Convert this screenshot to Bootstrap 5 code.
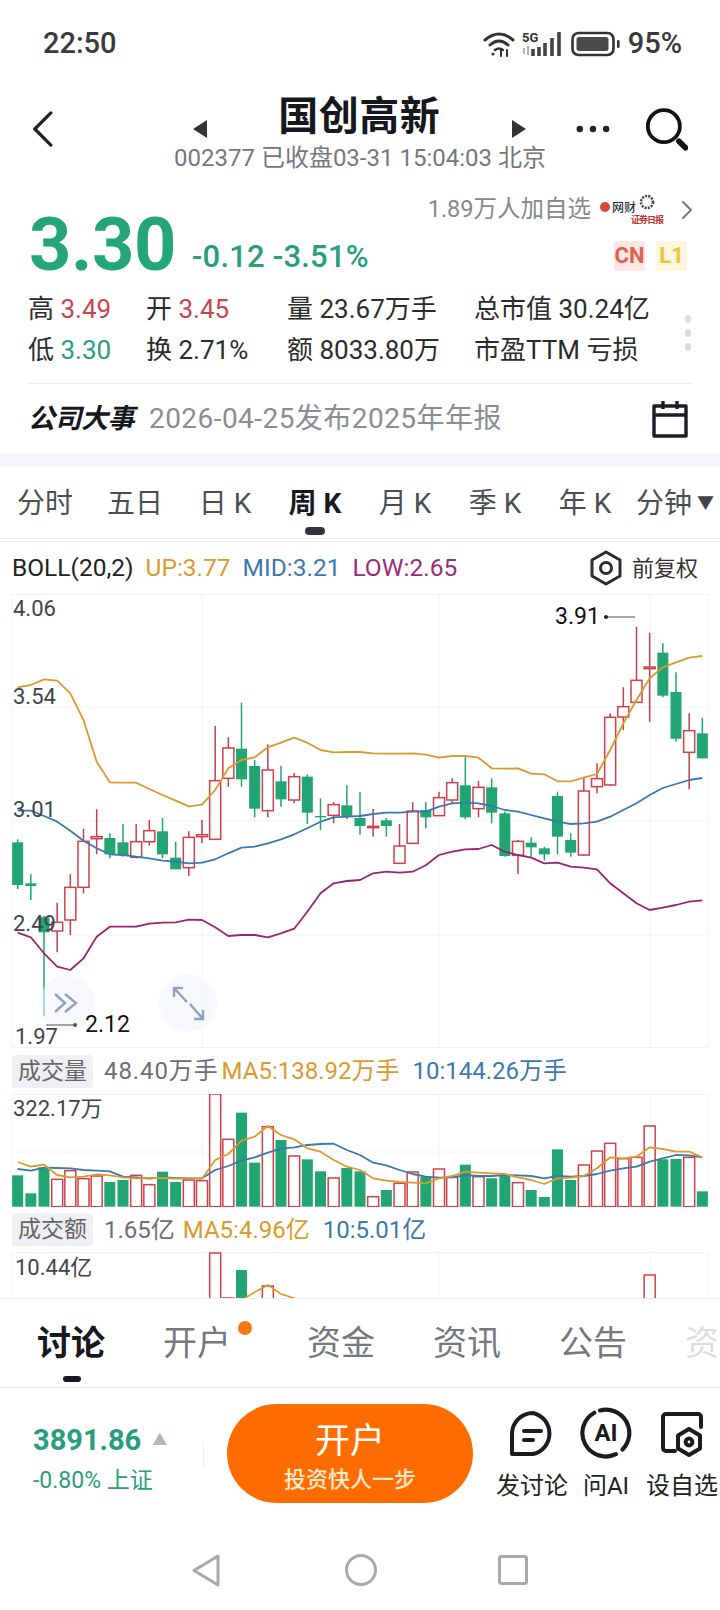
<!DOCTYPE html>
<html lang="zh">
<head>
  <meta charset="UTF-8">
  <title>国创高新</title>
  <meta name="viewport" content="width=device-width, initial-scale=1">
  <link href="https://cdn.jsdelivr.net/npm/bootstrap@5.3.0/dist/css/bootstrap.min.css" rel="stylesheet">
  <style>
    html, body { width: 720px; height: 1610px; overflow: hidden; background: #fff; }
    body { font-family: Roboto, "Noto Sans CJK SC", sans-serif; color: #222; }
    .screen { width: 720px; height: 1610px; overflow: hidden; }
    .screen > * { flex-shrink: 0; }
    .txt-red { color: #c9444d; }
    .txt-green { color: #2a9d7c; }
    .txt-orange { color: #dc9a2d; }
    .txt-blue { color: #3d78ad; }
    .txt-purple { color: #9a2d78; }
    .txt-gray { color: #6b6e73; }

    .status-row { height: 84px; padding: 4px 38px 0 43px; font-size: 29px; font-weight: 500; color: #3a3a3a; }
    .status-icons { gap: 7px; }

    .head-row { height: 66px; padding: 24px 32px 0; }
    .head-title { font-size: 40px; font-weight: 700; color: #15181d; width: 171px; text-align: center; line-height: 1; margin-bottom: 24px; white-space: nowrap; letter-spacing: .5px; }
    .head-mid { margin-left: 140px; gap: 67px; }
    .head-more { margin-left: 50px; }
    .head-search { margin-left: 35px; }
    .head-sub { height: 30px; font-size: 24px; color: #74777c; padding-left: 174px; line-height: 30px; margin-top: -7px; white-space: nowrap; }

    .quote-box { height: 115px; padding: 0 28px 0 29px; margin-top: 8px; }
    .big-price { font-size: 74px; font-weight: 700; color: #25a67a; line-height: 1; letter-spacing: -.5px; margin-top: 27px; }
    .price-diff { font-size: 31px; font-weight: 500; color: #2a9d7c; margin: 54px 0 0 16px; white-space: nowrap; line-height: 44px; letter-spacing: .2px; }
    .follow-row { height: 36px; margin-top: 11px; font-size: 23.5px; color: #85888c; margin-right: -1px; white-space: nowrap; }
    .tag-row { gap: 11px; margin-top: 13px; margin-right: 5px; }
    .mkt-tag { width: 31px; height: 30px; line-height: 30px; text-align: center; font-size: 22px; font-weight: 700; border-radius: 2px; }
    .tag-cn { background: #fde7e4; color: #e2604f; }
    .tag-l1 { background: #fdf5dc; color: #eec33f; }

    .stat-grid { display: grid; grid-template-columns: 118px 141px 187px 1fr; grid-auto-rows: 41px; align-items: center; padding-left: 28px; font-size: 26px; color: #2b2b2b; white-space: nowrap; margin-top: -7px; height: 82px; }
    .stat-wrap { position: relative; }
    .side-dots { position: absolute; left: 685px; top: 19px; gap: 6px; }
    .side-dots i { display: block; width: 6px; height: 8px; border-radius: 50%; background: #dcdcdc; }
    .stat-line { height: 1px; background: #eee; margin: 12px 28px 0; }

    .event-row { height: 70px; padding: 0 32px 0 28px; white-space: nowrap; }
    .event-name { font-weight: 700; font-style: italic; color: #15181d; font-size: 27px; width: 121px; letter-spacing: -.5px; }
    .event-txt { color: #8a8d91; font-size: 28px; letter-spacing: .45px; }
    .gap-band { height: 12px; background: #f5f6fb; }

    .period-row { display: grid; grid-template-columns: repeat(8, 90px); height: 73px; font-size: 28px; color: #4a4d52; border-bottom: 1px solid #e6e6e6; position: relative; white-space: nowrap; }
    .period-item { display: flex; align-items: center; justify-content: center; padding-top: 3px; }
    .period-on { font-weight: 700; color: #17191d; }
    .period-bar { position: absolute; left: 305px; top: 61px; width: 20px; height: 8px; background: #33363a; border-radius: 4px; }
    .period-k { margin-left: 7px; }
    .period-tri { font-size: 17px; margin-left: 5px; color: #444; }
    .thin-line { height: 3px; border-bottom: 1px solid #e9e9e9; }

    .boll-row { height: 52px; padding: 0 22px 0 12px; font-size: 24.5px; white-space: nowrap; }
    .boll-row span.boll-item { margin-right: 12px; }
    .adj-txt { font-size: 22px; color: #333; margin-left: 9px; }

    .chart-box { position: relative; width: 720px; overflow: hidden; }
    .chart-box svg { display: block; }
    .chart-one { height: 454px; }
    .chart-two { height: 113px; }
    .chart-three { height: 46px; }
    .axis-txt { position: absolute; font-size: 22px; line-height: 26px; color: #40434a; white-space: nowrap; }
    .mark-txt { color: #111; font-size: 23px; }

    .vol-row { height: 46px; padding-left: 12px; font-size: 24px; white-space: nowrap; }
    .vol-amt { height: 45px; }
    .vol-tag { background: #eef0f4; color: #666; border-radius: 4px; height: 33px; line-height: 33px; width: 81px; text-align: center; font-size: 23px; margin-right: 11px; }
    .vol-row span.vol-item { margin-right: 8px; }
    .vol-row span.vol-wide { letter-spacing: .9px; margin-right: 3px; }
    .vol-row span.vol-ma { margin-right: 13px; }

    .sub-tabs { height: 90px; border-top: 1px solid #ececec; border-bottom: 1px solid #e8e8e8; padding-left: 37px; gap: 58px; font-size: 34px; color: #75787d; position: relative; background: #fff; white-space: nowrap; }
    .sub-on { font-weight: 700; color: #15181d; }
    .sub-open { margin-right: 18px; position: relative; }
    .sub-dot { position: absolute; left: 75px; top: 3px; width: 14px; height: 14px; background: #f3780e; border-radius: 50%; }
    .sub-fade { color: #dedede; }
    .sub-bar { position: absolute; left: 63px; top: 77px; width: 18px; height: 6px; background: #15181d; border-radius: 3px; }

    .action-row { height: 131px; position: relative; padding-left: 33px; }
    .index-box { width: 170px; padding-top: 10px; }
    .index-val { font-size: 29px; font-weight: 700; color: #2a9d7c; line-height: 36px; white-space: nowrap; }
    .index-tri { color: #b5b5b5; font-size: 15px; margin-left: 11px; vertical-align: 5px; font-weight: 400; }
    .index-sub { font-size: 23px; color: #2a9d7c; line-height: 30px; margin-top: 8px; white-space: nowrap; }
    .v-sep { width: 1px; height: 26px; background: #eee; margin: 0 23px 0 0; }
    .open-btn { width: 246px; height: 99px; border: 0; border-radius: 50px; background: #ff6d00; color: #fff; line-height: 1; padding: 8px 0 0; flex: none; }
    .open-big { display: block; font-size: 35px; }
    .open-small { display: block; font-size: 22px; font-weight: 500; color: #ffe9cc; margin-top: 10px; }
    .side-act { position: absolute; top: 22px; text-align: center; font-size: 24px; color: #222; white-space: nowrap; line-height: 28px; }
    .act-talk { left: 496px; width: 72px; }
    .act-ai { left: 580px; width: 52px; }
    .act-pick { left: 646px; width: 72px; }
    .side-act svg { display: block; margin: 0 auto 14px; }
    .side-act svg.ai-ring { margin: -3px auto 13px; }
    .sys-nav { height: 90px; padding: 12px 0 0 192px; }
    .nav-home { margin: 0 121px 0 125px; }
  </style>
</head>
<body>
<div class="screen d-flex flex-column">

  <div class="status-row d-flex align-items-center justify-content-between">
    <span>22:50</span>
    <div class="status-icons d-flex align-items-center">
      <svg width="32" height="26" viewBox="0 0 32 26" fill="none" stroke="#333" stroke-linecap="round">
        <path d="M2 9Q16-3 30 9" stroke-width="3"/>
        <path d="M7 14Q16 6 25 14" stroke-width="3"/>
        <path d="M12 19Q16 16 20 19" stroke-width="2.4"/>
        <circle cx="10" cy="23" r="1.6" fill="#333" stroke="none"/>
        <path d="M18 25V19M24 25V19" stroke-width="2"/>
      </svg>
      <svg width="42" height="26" viewBox="0 0 42 26">
        <text x="0" y="11" font-family="Roboto" font-size="13" font-weight="700" fill="#333">5G</text>
        <path d="M2 17v6M6 15v9" stroke="#999" stroke-width="1.6"/>
        <path d="M11 18v7M17 16v9M23 12v13M30 7v18M37 1v24" stroke="#444" stroke-width="3.6"/>
      </svg>
      <svg width="50" height="26" viewBox="0 0 50 26">
        <rect x="1.5" y="2" width="41" height="22" rx="6" fill="none" stroke="#333" stroke-width="2.6"/>
        <rect x="5.5" y="6" width="32" height="14" rx="2.5" fill="#4a4a4a"/>
        <rect x="46" y="9" width="2.6" height="8" rx="1.2" fill="#333"/>
      </svg>
      <span>95%</span>
    </div>
  </div>

  <div class="head-row d-flex align-items-center">
    <svg width="22" height="38" viewBox="0 0 22 38" fill="none" stroke="#222" stroke-width="3.4" stroke-linecap="round" stroke-linejoin="round"><path d="M20 2 3 19l17 17"/></svg>
    <div class="head-mid d-flex align-items-center">
      <svg width="14" height="18" viewBox="0 0 14 18"><path d="M14 0v18L0 9z" fill="#333"/></svg>
      <span class="head-title">国创高新</span>
      <svg width="14" height="18" viewBox="0 0 14 18"><path d="M0 0v18l14-9z" fill="#333"/></svg>
    </div>
    <svg class="head-more" width="36" height="8" viewBox="0 0 36 8" fill="#222"><circle cx="4" cy="4" r="3.4"/><circle cx="18" cy="4" r="3.4"/><circle cx="32" cy="4" r="3.4"/></svg>
    <svg class="head-search" width="46" height="46" viewBox="0 0 46 46" fill="none" stroke="#111"><circle cx="20" cy="20" r="17" stroke-width="4"/><path d="M36 36l7 7" stroke-width="6" stroke-linecap="round"/></svg>
  </div>
  <div class="head-sub">002377 已收盘03-31 15:04:03 北京</div>

  <div class="quote-box d-flex justify-content-between">
    <div class="d-flex">
      <span class="big-price">3.30</span>
      <span class="price-diff">-0.12 -3.51%</span>
    </div>
    <div class="d-flex flex-column align-items-end">
      <div class="follow-row d-flex align-items-center">
        <span>1.89万人加自选</span>
        <svg class="ms-2" width="66" height="36" viewBox="0 0 66 36">
          <circle cx="6" cy="15" r="5" fill="#d8453a"/>
          <text x="13" y="20" font-family="Noto Sans CJK SC" font-size="12" font-weight="500" fill="#333">网财</text>
          <circle cx="48" cy="10" r="6" fill="none" stroke="#445" stroke-width="2.6" stroke-dasharray="2 1.2"/>
          <text x="32" y="31" font-family="Noto Sans CJK SC" font-size="9" font-weight="700" fill="#b8352a" textLength="33">证券日报</text>
        </svg>
        <svg class="ms-3" width="12" height="20" viewBox="0 0 12 20" fill="none" stroke="#777" stroke-width="2" stroke-linecap="round" stroke-linejoin="round"><path d="M2 2l8 8-8 8"/></svg>
      </div>
      <div class="tag-row d-flex">
        <span class="mkt-tag tag-cn">CN</span>
        <span class="mkt-tag tag-l1">L1</span>
      </div>
    </div>
  </div>

  <div class="stat-wrap">
    <div class="stat-grid">
      <div>高 <span class="txt-red">3.49</span></div>
      <div>开 <span class="txt-red">3.45</span></div>
      <div>量 23.67万手</div>
      <div>总市值 30.24亿</div>
      <div>低 <span class="txt-green">3.30</span></div>
      <div>换 2.71%</div>
      <div>额 8033.80万</div>
      <div>市盈TTM 亏损</div>
    </div>
    <div class="side-dots d-flex flex-column"><i></i><i></i><i></i></div>
    <div class="stat-line"></div>
  </div>

  <div class="event-row d-flex align-items-center">
    <span class="event-name">公司大事</span>
    <span class="event-txt flex-grow-1">2026-04-25发布2025年年报</span>
    <svg width="36" height="38" viewBox="0 0 36 38" fill="none" stroke="#1b1e22" stroke-width="3.4" stroke-linejoin="round"><path d="M2 6h32v30H2zM2 15h32"/><path d="M11 1v8M25 1v8"/></svg>
  </div>
  <div class="gap-band"></div>

  <div class="period-row">
    <div class="period-item">分时</div>
    <div class="period-item">五日</div>
    <div class="period-item">日<span class="period-k">K</span></div>
    <div class="period-item period-on">周<span class="period-k">K</span></div>
    <div class="period-item">月<span class="period-k">K</span></div>
    <div class="period-item">季<span class="period-k">K</span></div>
    <div class="period-item">年<span class="period-k">K</span></div>
    <div class="period-item">分钟<span class="period-tri">▼</span></div>
    <span class="period-bar"></span>
  </div>
  <div class="thin-line"></div>

  <div class="boll-row d-flex align-items-center">
    <span class="boll-item">BOLL(20,2)</span>
    <span class="boll-item txt-orange">UP:3.77</span>
    <span class="boll-item txt-blue">MID:3.21</span>
    <span class="boll-item txt-purple">LOW:2.65</span>
    <svg class="ms-auto" width="34" height="36" viewBox="0 0 34 36" fill="none" stroke="#2a2d31" stroke-width="3" stroke-linejoin="round"><path d="M17 2l14 8v16l-14 8-14-8V10z"/><circle cx="17" cy="18" r="5.5"/></svg>
    <span class="adj-txt">前复权</span>
  </div>

  <div class="chart-box chart-one" id="chartOne"></div>

  <div class="vol-row d-flex align-items-center">
    <span class="vol-tag">成交量</span>
    <span class="vol-item vol-wide txt-gray">48.40万手</span>
    <span class="vol-item vol-ma txt-orange">MA5:138.92万手</span>
    <span class="vol-item txt-blue">10:144.26万手</span>
  </div>
  <div class="chart-box chart-two" id="chartTwo"></div>

  <div class="vol-row vol-amt d-flex align-items-center">
    <span class="vol-tag">成交额</span>
    <span class="vol-item txt-gray">1.65亿</span>
    <span class="vol-item vol-ma txt-orange">MA5:4.96亿</span>
    <span class="vol-item txt-blue">10:5.01亿</span>
  </div>
  <div class="chart-box chart-three" id="chartThree"></div>

  <div class="sub-tabs d-flex align-items-center">
    <span class="sub-on">讨论</span>
    <span class="sub-open">开户<i class="sub-dot"></i></span>
    <span>资金</span>
    <span>资讯</span>
    <span>公告</span>
    <span class="sub-fade">资</span>
    <span class="sub-bar"></span>
  </div>

  <div class="action-row d-flex align-items-center">
    <div class="index-box">
      <div class="index-val">3891.86<span class="index-tri">▲</span></div>
      <div class="index-sub">-0.80% 上证</div>
    </div>
    <div class="v-sep"></div>
    <button class="open-btn" type="button">
      <span class="open-big">开户</span>
      <span class="open-small">投资快人一步</span>
    </button>
    <div class="side-act act-talk">
      <svg width="46" height="48" viewBox="0 0 46 48" fill="none" stroke="#1a1c20" stroke-width="4" stroke-linecap="round" stroke-linejoin="round">
        <path d="M3 44V24A21 21 0 0 1 24 3h0a21 21 0 0 1 0 41z"/><path d="M15 21h17M15 30h9"/>
      </svg>
      发讨论
    </div>
    <div class="side-act act-ai">
      <svg class="ai-ring" width="52" height="52" viewBox="0 0 50 50" fill="none" stroke="#1a1c20" stroke-width="4" stroke-linecap="round">
        <path d="M19.2 3.3A22.5 22.5 0 0 1 40.9 40.9"/><path d="M34.5 45.4A22.5 22.5 0 0 1 13.75 5.5"/>
        <text x="25" y="33" text-anchor="middle" font-family="Roboto" font-size="23" font-weight="700" fill="#1a1c20" stroke="none">AI</text>
      </svg>
      问AI
    </div>
    <div class="side-act act-pick">
      <svg width="42" height="48" viewBox="0 0 42 48" fill="none" stroke="#1a1c20" stroke-width="4" stroke-linecap="round" stroke-linejoin="round">
        <path d="M14 41H5a3 3 0 0 1-3-3V7a3 3 0 0 1 3-3h32a3 3 0 0 1 3 3v10"/>
        <path d="M28 19l11 6.5v13L28 45l-11-6.500v-13z"/><circle cx="28" cy="32" r="3.400"/>
      </svg>
      设自选
    </div>
  </div>

  <div class="sys-nav d-flex align-items-center">
    <svg width="28" height="33" viewBox="0 0 28 33" fill="none" stroke="#a9a9a9" stroke-width="3" stroke-linejoin="round"><path d="M26 2v29L2 16.500z"/></svg>
    <svg class="nav-home" width="32" height="32" viewBox="0 0 32 32" fill="none" stroke="#a9a9a9" stroke-width="3"><circle cx="16" cy="16" r="14.500"/></svg>
    <svg width="30" height="30" viewBox="0 0 30 30" fill="none" stroke="#a9a9a9" stroke-width="3"><rect x="1.500" y="1.500" width="27" height="27" rx="2"/></svg>
  </div>
</div>

<script>
  // candle data, [wickTop, wickBottom, bodyTop, bodyBottom, up?] measured at 3x, chart origin y=590
  const candles = [
    [748,897,757,885,0],[853,930,880,888,0],[978,1278,982,1027,0],[938,1087,997,1023,1],[853,1035,892,990,1],
    [716,910,754,892,1],[658,793,740,746,1],[730,805,744,793,0],[702,800,757,795,0],[702,805,755,802,1],
    [690,767,722,755,1],[684,805,724,793,0],[755,838,803,838,0],[724,858,742,833,1],[690,760,734,740,1],
    [408,748,572,748,1],[442,590,474,565,1],[338,590,476,568,0],[510,682,528,656,0],[463,682,540,662,1],
    [527,650,574,628,0],[548,640,560,630,1],[553,702,560,668,0],[625,720,678,682,0],[636,700,644,676,1],
    [586,688,646,678,0],[605,735,684,708,0],[657,740,709,713,1],[684,740,691,708,0],[702,822,768,820,1],
    [637,762,663,760,1],[637,715,660,682,0],[605,678,623,677,1],[565,640,578,630,1],[500,688,586,682,0],
    [572,682,592,656,1],[565,700,592,668,0],[665,800,670,798,0],[750,852,754,796,1],[742,802,758,772,0],
    [770,812,775,793,0],[605,793,618,740,0],[730,800,750,788,0],[560,798,603,795,1],[520,610,566,590,1],
    [370,588,382,585,1],[292,420,350,381,1],[110,338,271,337,1],[128,395,231,236,1],[160,322,188,317,0],
    [247,455,306,446,0],[370,598,422,487,1],[383,505,430,505,0]
  ];
  const upLine = [292,285,268,272,310,390,515,577,578,578,597,615,632,649,644,600,535,510,502,472,458,443,458,480,487,486,486,490,491,491,490,494,503,498,498,503,535,536,535,551,553,574,574,563,552,480,400,330,265,232,217,203,198];
  const midLine = [662,662,678,695,722,752,775,793,795,800,805,812,815,820,818,808,790,773,770,760,748,733,715,695,682,680,678,672,668,668,665,665,650,640,638,640,648,660,665,675,685,695,702,700,695,680,660,640,615,594,582,570,564];
  const lowLine = [1028,1042,1090,1130,1140,1105,1040,1010,1010,1010,1001,998,997,989,990,1012,1038,1035,1035,1042,1030,1016,965,910,880,873,870,850,845,848,845,826,795,785,778,777,765,785,795,803,820,818,830,833,838,880,910,940,960,953,945,935,931];
  const volTops = [376,430,352,388,362,386,378,396,390,376,404,365,396,390,392,132,268,188,338,230,270,318,328,364,384,354,364,440,420,400,366,380,357,382,344,380,385,378,398,420,441,298,390,345,303,280,326,322,228,328,327,322,424];
  const ma5 = [336,350,344,375,382,380,373,376,382,385,384,384,386,386,386,330,312,272,260,228,255,268,295,305,330,350,360,385,392,396,398,400,385,378,365,368,370,372,382,390,402,385,383,378,355,322,325,320,292,297,305,305,322];
  const ma10 = [357,362,353,354,355,360,362,364,380,382,386,382,384,385,385,360,348,332,322,308,296,292,285,282,281,300,315,338,346,360,372,380,383,382,375,378,378,375,376,378,385,378,380,378,372,362,355,350,335,325,315,316,322];

  const RED = '#cf4049', GREEN = '#20a573', ORANGE = '#dc9a2d', BLUE = '#3b78ae', PURPLE = '#96266f', GRID = '#f1f2f5';
  const cx = i => (53 + i * 39.5) / 3;

  function line(vals, yOf, color) {
    const pts = vals.map((v, i) => cx(i).toFixed(1) + ',' + yOf(v).toFixed(1)).join(' ');
    return `<polyline points="${pts}" fill="none" stroke="${color}" stroke-width="1.8" stroke-linejoin="round"/>`;
  }

  function frame(h, rows) {
    let s = `<rect x="12" y="0.5" width="696" height="${h - 1}" fill="none" stroke="${GRID}"/>`;
    rows.forEach(y => { s += `<path d="M12 ${y}H708" stroke="${GRID}"/>`; });
    [202, 439, 650].forEach(x => { s += `<path d="M${x} 0V${h}" stroke="${GRID}"/>`; });
    return s;
  }

  function label(box, text, left, center, cls) {
    const el = document.createElement('span');
    el.className = 'axis-txt' + (cls ? ' ' + cls : '');
    el.textContent = text;
    el.style.left = left + 'px';
    el.style.top = (center - 13) + 'px';
    box.appendChild(el);
  }

  // main candle chart
  const yA = v => v / 3 - 4;
  let svgA = frame(454, [113, 227, 341]);
  candles.forEach((c, i) => {
    const x = cx(i), col = c[4] ? RED : GREEN, w = 11;
    if (c[4]) {
      svgA += `<path d="M${x} ${yA(c[0])}V${yA(c[2])}M${x} ${yA(c[3])}V${yA(c[1])}" stroke="#c63f49" stroke-width="1.5"/>`;
      svgA += `<rect x="${x - w / 2}" y="${yA(c[2])}" width="${w}" height="${(c[3] - c[2]) / 3}" fill="#fff" stroke="${col}" stroke-width="1.5"/>`;
    } else {
      svgA += `<path d="M${x} ${yA(c[0])}V${yA(c[1])}" stroke="${col}" stroke-width="1.5"/>`;
      svgA += `<rect x="${x - w / 2}" y="${yA(c[2])}" width="${w}" height="${(c[3] - c[2]) / 3}" fill="${col}"/>`;
    }
  });
  svgA += line(upLine, yA, ORANGE) + line(midLine, yA, BLUE) + line(lowLine, yA, PURPLE);
  // jump and zoom buttons, high and low markers
  svgA += `<circle cx="67" cy="409" r="28" fill="#f0f3fa" fill-opacity=".55"/><circle cx="188" cy="409" r="29" fill="#f0f3fa" fill-opacity=".6"/>
    <path d="M55 400l10 9-10 9M65 400l11 9-11 9" fill="none" stroke="#8fa0c0" stroke-width="2.4"/>
    <path d="M174 394l13 14M174 403v-9h9M190 410l13 15M203 416v9h-9" fill="none" stroke="#8fa0c0" stroke-width="2.4"/>
    <path d="M46 431H75M606 23H635" stroke="#555" stroke-width="1.2"/><circle cx="75" cy="431" r="2" fill="#555"/><circle cx="606" cy="23" r="2" fill="#222"/>`;
  const boxA = document.getElementById('chartOne');
  boxA.innerHTML = `<svg width="720" height="454" viewBox="0 0 720 454">${svgA}</svg>`;
  label(boxA, '4.06', 13, 15);
  label(boxA, '3.54', 13, 103);
  label(boxA, '3.01', 13, 216);
  label(boxA, '2.49', 13, 330);
  label(boxA, '1.97', 15, 443);
  label(boxA, '2.12', 85, 431, 'mark-txt');
  label(boxA, '3.91', 555, 23, 'mark-txt');

  // volume chart
  const yB = v => v / 3 - 44;
  let svgB = frame(113, [58]);
  volTops.forEach((t, i) => {
    const x = cx(i), up = candles[i][4];
    svgB += up
      ? `<rect x="${x - 5.5}" y="${yB(t)}" width="11" height="${(470 - t) / 3}" fill="#fff" stroke="${RED}" stroke-width="1.5"/>`
      : `<rect x="${x - 5.5}" y="${yB(t)}" width="11" height="${(470 - t) / 3}" fill="${GREEN}"/>`;
  });
  svgB += line(ma10, yB, BLUE) + line(ma5, yB, ORANGE);
  const boxB = document.getElementById('chartTwo');
  boxB.innerHTML = `<svg width="720" height="113" viewBox="0 0 720 113">${svgB}</svg>`;
  label(boxB, '322.17万', 13, 15);

  // amount chart, only its top shows above the sheet
  const tops = { 15: [0, 1], 16: [45, 1], 17: [17, 0], 19: [33, 1], 48: [22, 1], 14: [52, 1], 18: [52, 0] };
  let svgC = frame(60, []);
  Object.keys(tops).forEach(k => {
    const x = cx(+k), t = tops[k];
    svgC += t[1]
      ? `<rect x="${x - 5.5}" y="${t[0] + 1}" width="11" height="120" fill="#fff" stroke="${RED}" stroke-width="1.5"/>`
      : `<rect x="${x - 5.5}" y="${t[0] + 1}" width="11" height="120" fill="${GREEN}"/>`;
  });
  svgC += `<polyline points="245,46 255,40 268,33 281,42 300,48" fill="none" stroke="${ORANGE}" stroke-width="1.6"/>`;
  const boxC = document.getElementById('chartThree');
  boxC.innerHTML = `<svg width="720" height="60" viewBox="0 0 720 60">${svgC}</svg>`;
  label(boxC, '10.44亿', 15, 16);
</script>
<script src="https://cdn.jsdelivr.net/npm/bootstrap@5.3.0/dist/js/bootstrap.bundle.min.js"></script>
</body>
</html>
